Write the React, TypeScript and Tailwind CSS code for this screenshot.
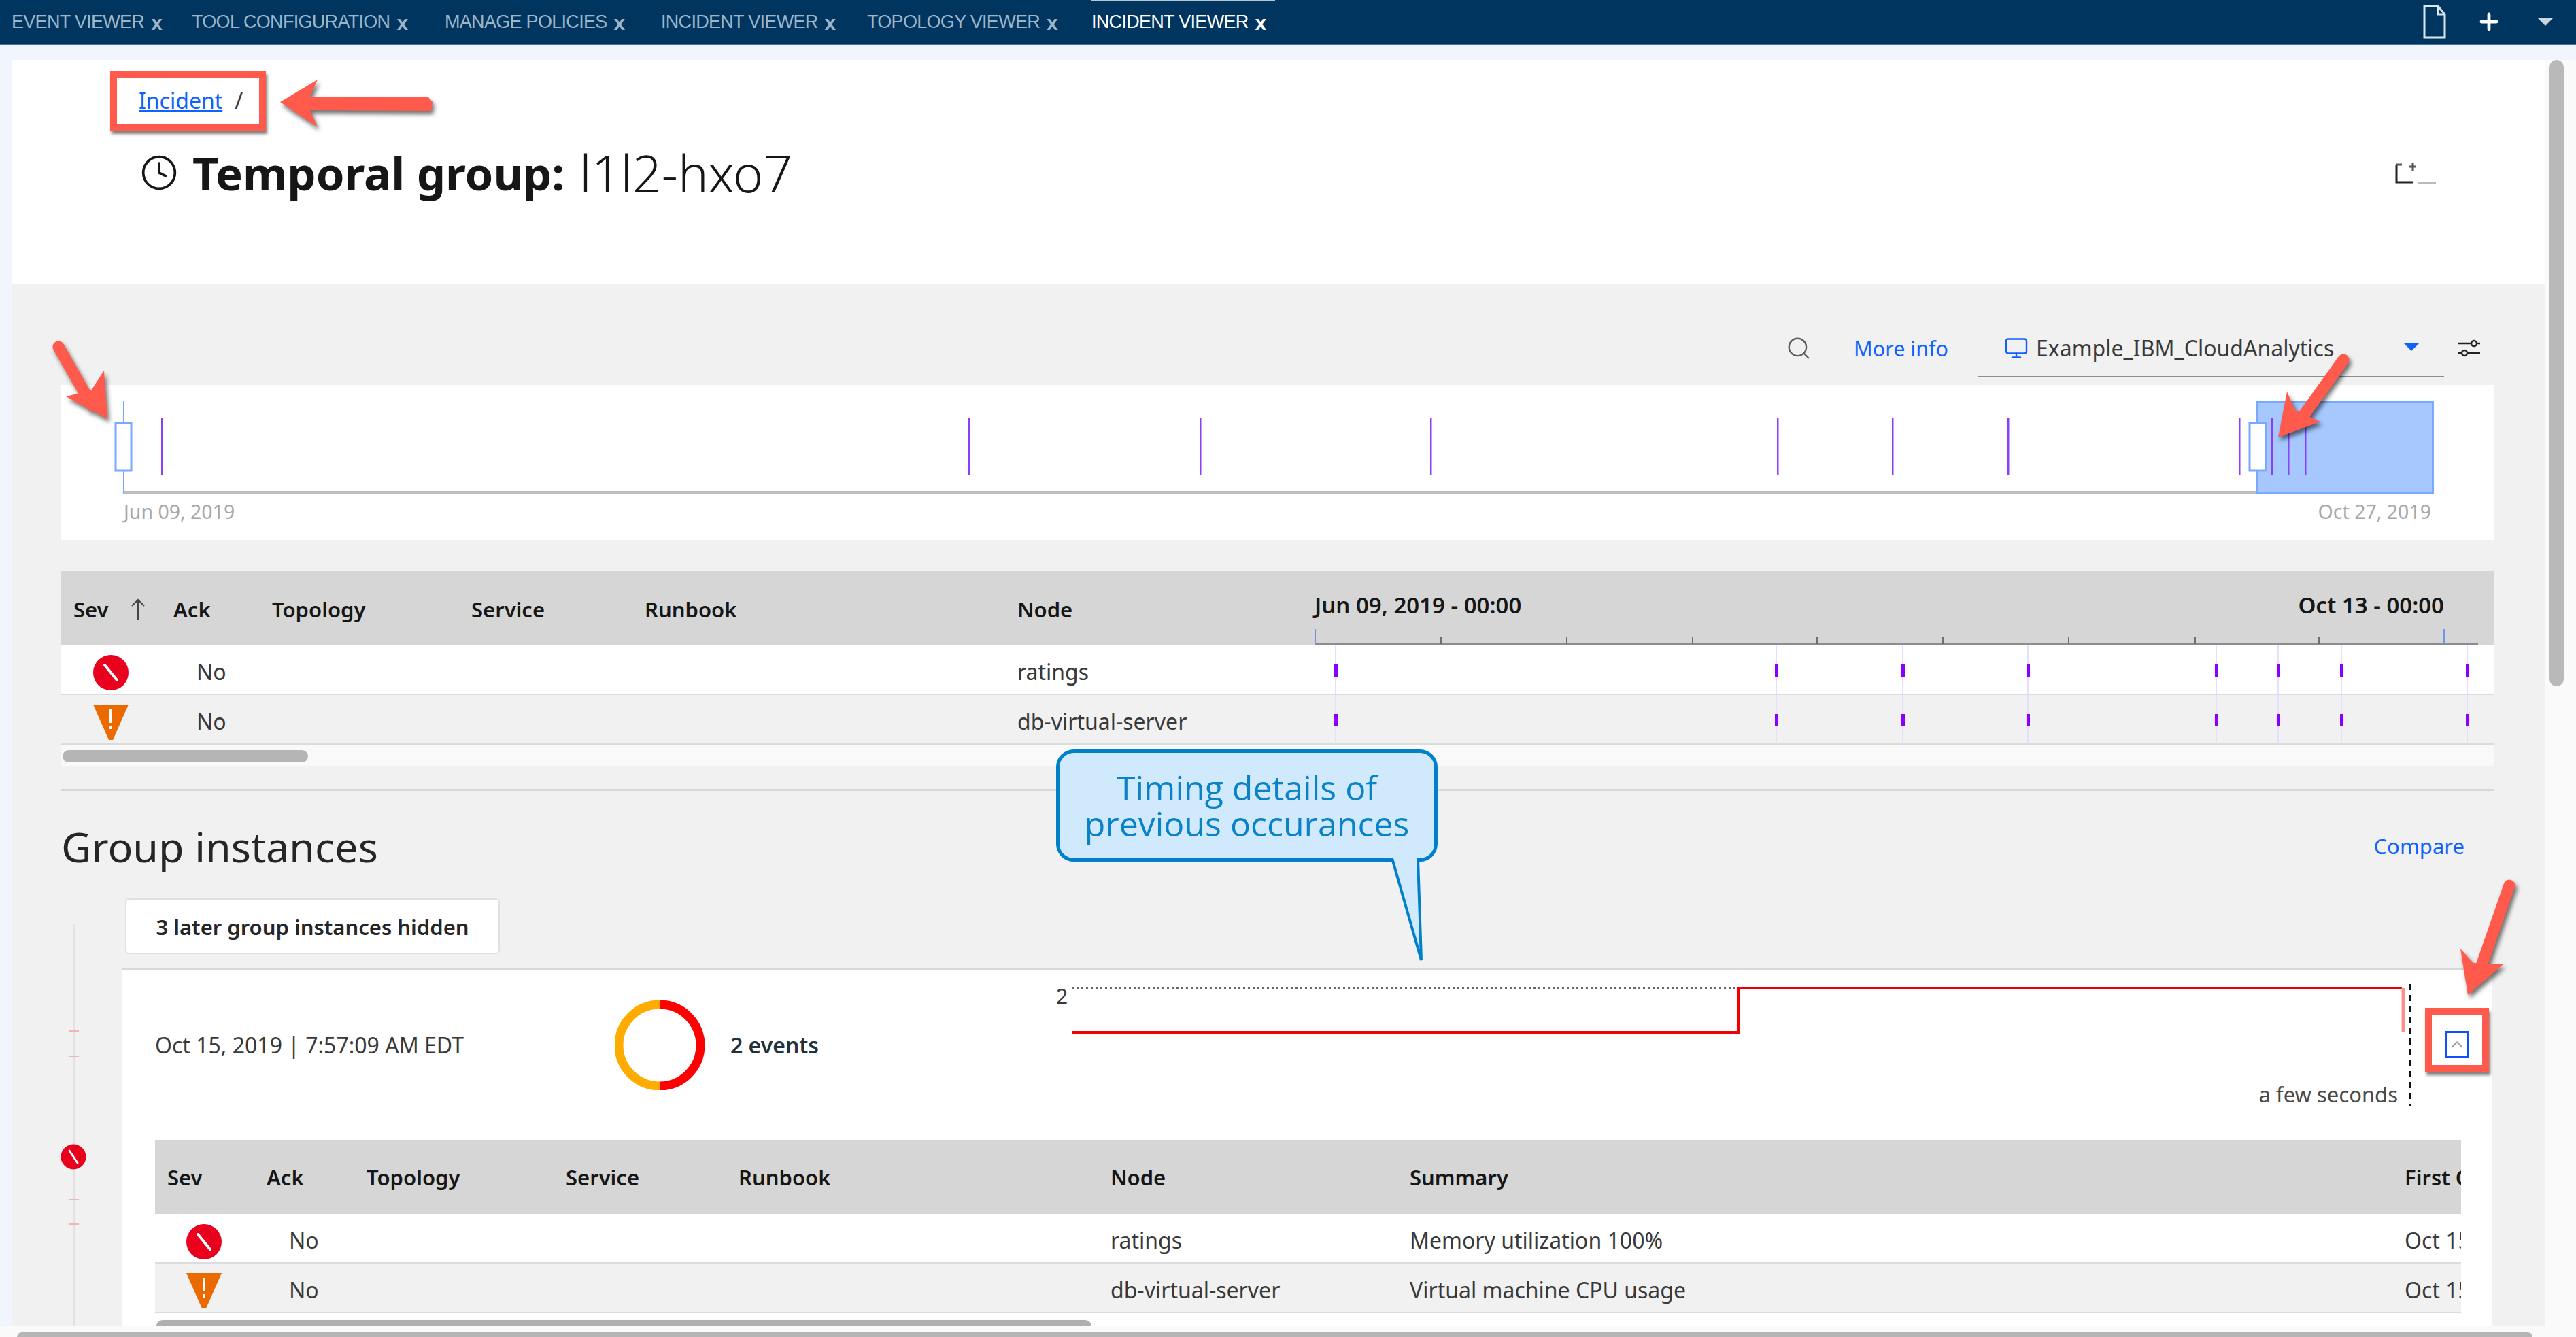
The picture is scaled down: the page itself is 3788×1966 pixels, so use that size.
import { ChevronUp, Clock, Monitor, Plus, Search } from "lucide-react";

const tabs = [
  { label: "EVENT VIEWER", w: "w-[265px]" },
  { label: "TOOL CONFIGURATION", w: "w-[372px]" },
  { label: "MANAGE POLICIES", w: "w-[318px]" },
  { label: "INCIDENT VIEWER", w: "w-[303px]" },
  { label: "TOPOLOGY VIEWER", w: "w-[330px]" },
];

const overviewMarks = [238, 1425, 1765, 2104, 2614, 2783, 2953, 3293, 3341, 3365, 3390];
const rowMarks = [1964, 2612, 2798, 2982, 3259, 3350, 3443, 3628];
const axisTicks = [2118, 2303, 2488, 2671, 2856, 3041, 3227, 3409];

function SevCritical({ size = 52 }: { size?: number }) {
  return (
    <svg width={size} height={size} viewBox="0 0 52 52" className="block shrink-0">
      <circle cx="26" cy="26" r="26" fill="#e8001c" />
      <line x1="17" y1="15" x2="35" y2="37" stroke="#fff" strokeWidth="4" strokeLinecap="round" />
    </svg>
  );
}

function SevMajor() {
  return (
    <svg width="52" height="52" viewBox="0 0 52 52" className="block shrink-0">
      <polygon points="0,0 52,0 29,52 23,52" fill="#eb6a00" />
      <rect x="24" y="7" width="4" height="20" fill="#fff" />
      <rect x="24" y="31" width="4" height="5" fill="#fff" />
    </svg>
  );
}

function RowMarks({ y }: { y: number }) {
  return (
    <svg width="1735" height="72" viewBox="0 0 1735 72" className="block">
      {rowMarks.map((x) => (
        <g key={x}>
          <rect x={x - 1933 - 1} y="0" width="2" height="72" fill="#eadcff" />
          <rect x={x - 1933 - 2} y={y} width="5" height="18" fill="#8a00ff" />
        </g>
      ))}
    </svg>
  );
}

function EventTable() {
  const cols = "grid grid-cols-[165px_145px_293px_255px_548px_437px_1735px]";
  return (
    <div className="mt-[46px]">
      <div className={`${cols} h-[109px] bg-[#d6d6d6] font-semibold text-[31px] text-[#161616]`}>
        <div className="flex items-center pl-[18px] pt-[3px]">
          Sev
          <svg width="22" height="32" viewBox="0 0 22 32" className="ml-[32px]" fill="none" stroke="#444" strokeWidth="2">
            <path d="M11 31V2M2 11l9-9 9 9" />
          </svg>
        </div>
        <div className="flex items-center pt-[3px]">Ack</div>
        <div className="flex items-center pt-[3px]">Topology</div>
        <div className="flex items-center pt-[3px]">Service</div>
        <div className="flex items-center pt-[3px]">Runbook</div>
        <div className="flex items-center pt-[3px]">Node</div>
        <div className="flex flex-col justify-end">
          <div className="flex justify-between pr-[74px] mb-[17px] text-[33px] leading-[36px] font-semibold">
            <span>Jun 09, 2019 - 00:00</span>
            <span>Oct 13 - 00:00</span>
          </div>
          <svg width="1735" height="24" viewBox="0 0 1735 24" className="block">
            <rect x="0" y="21" width="1711" height="3" fill="#8d8d8d" />
            <rect x="0" y="0" width="2" height="22" fill="#6f94e8" />
            <rect x="1660" y="0" width="2" height="22" fill="#6f94e8" />
            {axisTicks.map((x) => (
              <rect key={x} x={x - 1933} y="11" width="2" height="11" fill="#6f6f6f" />
            ))}
          </svg>
        </div>
      </div>
      <div className={`${cols} h-[73px] bg-white border-b-2 border-[#dcdcdc] text-[32px] text-[#393939]`}>
        <div className="pl-[47px] pt-[14px]">
          <SevCritical />
        </div>
        <div className="flex items-center pl-[34px] pt-[6px]">No</div>
        <div className="col-start-6 flex items-center pt-[6px]">ratings</div>
        <div className="col-start-7">
          <RowMarks y={28} />
        </div>
      </div>
      <div className={`${cols} h-[73px] bg-[#f1f1f1] border-b-2 border-[#dcdcdc] text-[32px] text-[#393939]`}>
        <div className="pl-[47px] pt-[14px]">
          <SevMajor />
        </div>
        <div className="flex items-center pl-[34px] pt-[6px]">No</div>
        <div className="col-start-6 flex items-center pt-[6px] whitespace-nowrap">db-virtual-server</div>
        <div className="col-start-7">
          <RowMarks y={28} />
        </div>
      </div>
      <div className="h-[32px] bg-[#f9f9f9] pt-[8px] pl-[2px]">
        <div className="w-[361px] h-[18px] rounded-full bg-[#b5b5b5]" />
      </div>
    </div>
  );
}

function InstanceTable() {
  const cols = "grid grid-cols-[164px_147px_293px_254px_547px_440px_1463px_83px]";
  return (
    <div className="ml-[48px] w-[3391px] overflow-hidden">
      <div className={`${cols} h-[108px] items-center bg-[#d6d6d6] font-semibold text-[31px] text-[#161616]`}>
        <div className="pl-[18px]">Sev</div>
        <div>Ack</div>
        <div>Topology</div>
        <div>Service</div>
        <div>Runbook</div>
        <div>Node</div>
        <div>Summary</div>
        <div className="overflow-hidden whitespace-nowrap">First Occurrence</div>
      </div>
      <div className={`${cols} h-[73px] bg-white border-b-2 border-[#dcdcdc] text-[32px] text-[#393939]`}>
        <div className="pl-[46px] pt-[15px]">
          <SevCritical />
        </div>
        <div className="flex items-center pl-[33px] pt-[6px]">No</div>
        <div className="col-start-6 flex items-center pt-[6px]">ratings</div>
        <div className="col-start-7 flex items-center pt-[6px]">Memory utilization 100%</div>
        <div className="col-start-8 flex items-center pt-[6px] overflow-hidden whitespace-nowrap">Oct 15, 2019</div>
      </div>
      <div className={`${cols} h-[73px] bg-[#f1f1f1] border-b-2 border-[#dcdcdc] text-[32px] text-[#393939]`}>
        <div className="pl-[46px] pt-[14px]">
          <SevMajor />
        </div>
        <div className="flex items-center pl-[33px] pt-[6px]">No</div>
        <div className="col-start-6 flex items-center pt-[6px] whitespace-nowrap">db-virtual-server</div>
        <div className="col-start-7 flex items-center pt-[6px]">Virtual machine CPU usage</div>
        <div className="col-start-8 flex items-center pt-[6px] overflow-hidden whitespace-nowrap">Oct 15, 2019</div>
      </div>
      <div className="mt-[10px] ml-[2px] w-[1375px] h-[9px] rounded-t-full bg-[#b0b0b0]" />
    </div>
  );
}

function Rail() {
  return (
    <svg width="90" height="640" viewBox="0 0 90 640" className="block shrink-0">
      <rect x="17" y="38" width="3" height="602" fill="#e2e2e2" />
      {[194, 232, 442, 478].map((y) => (
        <rect key={y} x="11" y={y} width="15" height="2" fill="#f3b3b8" />
      ))}
      <circle cx="18" cy="380" r="18.5" fill="#e8001c" />
      <line x1="12" y1="371" x2="24" y2="389" stroke="#fff" strokeWidth="3" strokeLinecap="round" />
    </svg>
  );
}

function OccurrenceChart() {
  return (
    <div className="relative self-start mt-[14px] w-[2007px] h-[200px] shrink-0">
      <svg width="2007" height="200" viewBox="0 0 2007 200" className="block">
        <line x1="23" y1="13" x2="1983" y2="13" stroke="#666" strokeWidth="2" strokeDasharray="3 4" />
        <polyline points="23,78 1003,78 1003,13 1979,13" fill="none" stroke="#f00000" strokeWidth="4" />
        <line x1="1981" y1="13" x2="1981" y2="78" stroke="#ff8f8f" strokeWidth="5" />
        <line x1="1991" y1="7" x2="1991" y2="186" stroke="#111" strokeWidth="3" strokeDasharray="9 7" />
      </svg>
      <span className="absolute left-0 top-[2px] text-[#393939]">2</span>
      <span className="absolute right-[34px] top-[146px] text-[31px] text-[#4a4a4a] whitespace-nowrap">a few seconds</span>
    </div>
  );
}

function Annotations() {
  const red = "#ff5a4b";
  return (
    <svg
      width="3788"
      height="1966"
      viewBox="0 0 3788 1966"
      className="absolute left-0 top-0 pointer-events-none drop-shadow-[3px_5px_3px_rgba(0,0,0,0.55)]"
    >
      {/* breadcrumb arrow */}
      <polygon points="412,150 467,117 456,142 630,143 636,150 634,163 456,162 467,187" fill={red} />
      {/* left marker arrow */}
      <line x1="86" y1="510" x2="135" y2="596" stroke={red} strokeWidth="17" strokeLinecap="round" />
      <polygon points="158,616 153,545 134,574 97,583" fill={red} />
      {/* right marker arrow */}
      <line x1="3446" y1="529" x2="3378" y2="624" stroke={red} strokeWidth="17" strokeLinecap="round" />
      <polygon points="3350,643 3363,576 3375,603 3412,620" fill={red} />
      {/* collapse arrow */}
      <line x1="3690" y1="1302" x2="3642" y2="1440" stroke={red} strokeWidth="17" strokeLinecap="round" />
      <polygon points="3629,1463 3618,1395 3637,1416 3681,1418" fill={red} />
    </svg>
  );
}

function Callout() {
  return (
    <div className="absolute left-[1553px] top-[1102px] w-[561px] h-[165px] rounded-[26px] border-[5px] border-[#0080c8] bg-[#d0e9fd] flex items-center justify-center font-['Open_Sans',sans-serif] text-[50px] leading-[53px] text-[#0a82c8]">
      <span className="text-center whitespace-nowrap">
        Timing details of
        <br />
        previous occurances
      </span>
      <svg width="60" height="160" viewBox="0 0 60 160" className="absolute left-[484px] top-[150px]">
        <polygon points="5,5 43,5 48,155" fill="#d0e9fd" />
        <polyline points="5,5 48,155 43,5" fill="none" stroke="#0080c8" strokeWidth="4" />
      </svg>
    </div>
  );
}

export default function App() {
  return (
    <div className="relative w-[3788px] h-[1966px] overflow-hidden flex flex-col bg-[#f1f5fd] font-['Noto_Sans',sans-serif] text-[30px]">
      {/* top tabs */}
      <div className="h-[66px] shrink-0 bg-[#00355f] border-b-2 border-[#4a7196] flex items-center pl-[17px] font-['Liberation_Sans',sans-serif] text-[27px] tracking-[-0.7px] text-[#9db5c9]">
        {tabs.map((t) => (
          <div key={t.label} className={`${t.w} flex items-center whitespace-nowrap`}>
            {t.label}
            <span className="ml-[10px] font-bold text-[30px] leading-none pt-[4px]">x</span>
          </div>
        ))}
        <div className="relative h-full flex items-center whitespace-nowrap text-white">
          <div className="absolute left-0 top-0 w-[270px] h-[2px] bg-[#b9c6d2]" />
          INCIDENT VIEWER
          <span className="ml-[10px] font-bold text-[30px] leading-none pt-[4px]">x</span>
        </div>
        <div className="ml-auto flex items-center pr-[33px] text-white">
          <svg width="34" height="50" viewBox="0 0 34 50" fill="none" stroke="#dce6ee" strokeWidth="3">
            <path d="M2 2h20l10 12v34H2z" />
            <path d="M22 2v12h10" />
          </svg>
          <Plus size={38} strokeWidth={3} className="ml-[44px]" />
          <svg width="24" height="12" viewBox="0 0 24 12" className="ml-[52px]">
            <polygon points="0,0 24,0 12,12" fill="#c6d6e3" />
          </svg>
        </div>
      </div>

      <div className="flex flex-1 min-h-0 pt-[22px] pl-[17px]">
        <div className="w-[3726px] flex flex-col min-h-0 overflow-hidden">
          {/* page header */}
          <div className="h-[330px] shrink-0 bg-white pt-[16px]">
            <div className="ml-[145px] w-[229px] h-[88px] border-[10px] border-[#ff5a4b] shadow-[2px_5px_4px_rgba(0,0,0,0.5)] flex items-center pl-[32px] whitespace-nowrap text-[32px] text-[#0f62fe]">
              <span className="underline">Incident</span>
              <span className="ml-[18px] text-[#393939]">/</span>
            </div>
            <div className="mt-[26px] h-[72px] flex items-center pl-[189px] pr-[156px] text-[67px] leading-none text-[#161616]">
              <Clock size={56} strokeWidth={1.6} />
              <span className="ml-[21px] font-bold">Temporal group:</span>
              <span className="ml-[22px] text-[75px] font-light">l1l2-hxo7</span>
              <svg width="67" height="32" viewBox="0 0 67 32" className="ml-auto">
                <path d="M4 5v25h24" fill="none" stroke="#222" strokeWidth="3" />
                <path d="M4 4h8M28 2v12M23 7h10" fill="none" stroke="#555" strokeWidth="3" />
                <path d="M36 31h26" stroke="#bbb" strokeWidth="2" />
              </svg>
            </div>
          </div>

          {/* event group */}
          <div className="flex-1 min-h-0 bg-[#f1f1f1] pl-[73px] pr-[75px] pt-[79px]">
            <div className="h-[58px] flex items-start justify-end pr-[21px] leading-[30px] text-[#393939]">
              <Search size={38} strokeWidth={1.5} className="-mt-[4px] text-[#5f5f5f]" />
              <span className="ml-[62px] text-[30.5px] text-[#0f62fe] whitespace-nowrap">More info</span>
              <div className="ml-[43px] w-[686px] h-[58px] border-b-2 border-[#8d8d8d] flex items-start pl-[39px] pr-[37px] text-[32px]">
                <Monitor size={36} strokeWidth={1.6} className="-mt-[3px] text-[#0f62fe]" />
                <span className="ml-[11px] whitespace-nowrap">Example_IBM_CloudAnalytics</span>
                <svg width="22" height="11" viewBox="0 0 22 11" className="ml-auto mt-[8px]">
                  <polygon points="0,0 22,0 11,11" fill="#0f62fe" />
                </svg>
              </div>
              <svg width="32" height="30" viewBox="0 0 32 30" className="ml-[21px]" fill="none" stroke="#222" strokeWidth="2.5">
                <path d="M0 8h19M27 8h5M0 22h5M13 22h19" />
                <circle cx="23" cy="8" r="4" />
                <circle cx="9" cy="22" r="4" />
              </svg>
            </div>

            {/* overview timeline */}
            <div className="mt-[11px] h-[228px] bg-white">
              <svg width="3578" height="166" viewBox="0 0 3578 166" className="block">
                <rect x="92" y="156" width="3140" height="4" fill="#bdbdbd" />
                <rect x="91" y="23" width="2" height="137" fill="#78a9ff" />
                <rect x="3229.5" y="24.5" width="258" height="134" fill="#a6c8ff" stroke="#78a9ff" strokeWidth="3" />
                {overviewMarks.map((x) => (
                  <rect key={x} x={x - 90 - 1} y="49" width="2.5" height="84" fill="#8a3ffc" />
                ))}
                <rect x="80" y="56" width="23" height="70" fill="#fff" stroke="#78a9ff" strokeWidth="3" />
                <rect x="3218" y="56" width="24" height="70" fill="#fff" stroke="#78a9ff" strokeWidth="3" />
              </svg>
              <div className="mt-[2px] flex justify-between pl-[92px] pr-[93px] text-[28.5px] leading-[36px] text-[#a8a8a8]">
                <span>Jun 09, 2019</span>
                <span>Oct 27, 2019</span>
              </div>
            </div>

            <EventTable />

            <div className="mt-[33px] h-[3px] bg-[#d8d8d8]" />

            <div className="mt-[41px] h-[80px] flex items-center justify-between pr-[44px]">
              <span className="text-[61px] leading-none text-[#262626]">Group instances</span>
              <span className="text-[31px] text-[#0f62fe]">Compare</span>
            </div>

            <div className="mt-[37px] flex">
              <Rail />
              <div className="w-[3485px] shrink-0">
                <button className="ml-[4px] w-[551px] h-[82px] pt-[2px] rounded-[6px] border-2 border-[#e0e0e0] bg-white font-semibold text-[31px] text-[#262626] whitespace-nowrap">
                  3 later group instances hidden
                </button>
                <div className="mt-[20px] border-t-[3px] border-[#d8d8d8] bg-white text-[#393939]">
                  <div className="h-[222px] mb-[29px] flex items-center">
                    <span className="ml-[48px] w-[676px] text-[32px] whitespace-nowrap">Oct 15, 2019 | 7:57:09 AM EDT</span>
                    <svg width="132" height="132" viewBox="0 0 132 132" className="shrink-0">
                      <path d="M66 6a60 60 0 0 0 0 120" fill="none" stroke="#ffab00" strokeWidth="13" />
                      <path d="M66 6a60 60 0 0 1 0 120" fill="none" stroke="#ff0000" strokeWidth="13" />
                    </svg>
                    <span className="ml-[38px] w-[479px] font-semibold text-[32px] text-[#21323f] whitespace-nowrap">2 events</span>
                    <OccurrenceChart />
                    <div className="self-start mt-[56px] ml-[6px] w-[94px] h-[94px] pt-[14px] border-[10px] border-[#ff5a4b] shadow-[2px_5px_4px_rgba(0,0,0,0.5)] flex items-center justify-center">
                      <div className="w-[36px] h-[40px] border-[3px] border-[#0f4fff] flex items-center justify-center">
                        <ChevronUp size={30} strokeWidth={1.5} className="text-[#999]" />
                      </div>
                    </div>
                  </div>
                  <InstanceTable />
                </div>
              </div>
            </div>
          </div>
        </div>
        {/* page scrollbar */}
        <div className="flex-1 bg-[#fafafa] pl-[6px]">
          <div className="w-[21px] h-[921px] rounded-full bg-[#b9b9b9]" />
        </div>
      </div>

      <div className="h-[16px] shrink-0 bg-[#fafafa] pl-[25px] pt-[9px]">
        <div className="w-[3699px] h-[7px] rounded-t-full bg-[#b5b5b5]" />
      </div>

      <Callout />
      <Annotations />
    </div>
  );
}
